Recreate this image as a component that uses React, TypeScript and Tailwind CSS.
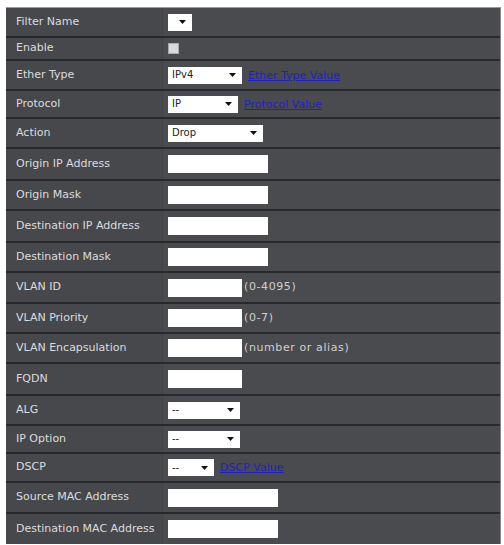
import React from 'react';

type Control =
  | { kind: 'select'; width: number; text?: string; link?: string }
  | { kind: 'checkbox' }
  | { kind: 'input'; width: number; hint?: string };

interface Row {
  label: string;
  height: number;
  control: Control;
}

const rows: Row[] = [
  { label: 'Filter Name', height: 30, control: { kind: 'select', width: 24 } },
  { label: 'Enable', height: 23, control: { kind: 'checkbox' } },
  { label: 'Ether Type', height: 30, control: { kind: 'select', width: 74, text: 'IPv4', link: 'Ether Type Value' } },
  { label: 'Protocol', height: 28, control: { kind: 'select', width: 70, text: 'IP', link: 'Protocol Value' } },
  { label: 'Action', height: 30, control: { kind: 'select', width: 95, text: 'Drop' } },
  { label: 'Origin IP Address', height: 32, control: { kind: 'input', width: 100 } },
  { label: 'Origin Mask', height: 30, control: { kind: 'input', width: 100 } },
  { label: 'Destination IP Address', height: 32, control: { kind: 'input', width: 100 } },
  { label: 'Destination Mask', height: 30, control: { kind: 'input', width: 100 } },
  { label: 'VLAN ID', height: 31, control: { kind: 'input', width: 74, hint: '(0-4095)' } },
  { label: 'VLAN Priority', height: 30, control: { kind: 'input', width: 74, hint: '(0-7)' } },
  { label: 'VLAN Encapsulation', height: 30, control: { kind: 'input', width: 74, hint: '(number or alias)' } },
  { label: 'FQDN', height: 32, control: { kind: 'input', width: 74 } },
  { label: 'ALG', height: 30, control: { kind: 'select', width: 72, text: '--' } },
  { label: 'IP Option', height: 28, control: { kind: 'select', width: 72, text: '--' } },
  { label: 'DSCP', height: 29, control: { kind: 'select', width: 46, text: '--', link: 'DSCP Value' } },
  { label: 'Source MAC Address', height: 31, control: { kind: 'input', width: 110 } },
  { label: 'Destination MAC Address', height: 30, control: { kind: 'input', width: 110 } },
];

const Arrow = () => (
  <svg width="7" height="4" viewBox="0 0 7 4" className="shrink-0">
    <path d="M0 0 L7 0 L3.5 4 Z" fill="#111" />
  </svg>
);

const renderControl = (c: Control) => {
  if (c.kind === 'checkbox') {
    return <div className="w-[11px] h-[11px] bg-[#d9d9d9] border border-[#aaa]" />;
  }
  if (c.kind === 'input') {
    return (
      <div className="flex items-center">
        <div className="h-[18px] bg-white" style={{ width: c.width }} />
        {c.hint && <span className="ml-[2px] text-[11px] text-[#cfcfcf] tracking-[0.6px]">{c.hint}</span>}
      </div>
    );
  }
  return (
    <div className="flex items-center">
      <div
        className="h-[17px] bg-white flex items-center justify-between pl-[4px] pr-[6px]"
        style={{ width: c.width }}
      >
        <span className="text-[10px] text-[#222] leading-none">{c.text ?? ''}</span>
        <Arrow />
      </div>
      {c.link && (
        <a href="#" className="ml-[6px] text-[11px] text-[#1f1fc4] underline leading-none">
          {c.link}
        </a>
      )}
    </div>
  );
};

export default function App() {
  return (
    <div className="w-[504px] h-[545px] bg-white pt-[7px] pl-[6px] overflow-hidden font-['DejaVu_Sans',sans-serif]">
      <div className="w-[495px] border-t border-[#9a9a9a] border-r border-r-[#8a8a8a] bg-[#4a4b4f]">
        {rows.map((row, i) => (
          <div
            key={row.label}
            className={`flex items-stretch ${i < rows.length - 1 ? 'border-b-2 border-[#28292c]' : ''}`}
            style={{ height: row.height }}
          >
            <div className="w-[157px] shrink-0 pl-[10px] flex items-center text-[11px] text-[#dcdcdc] bg-[#47484c] border-r border-[#434448]">
              {row.label}
            </div>
            <div className="flex-1 pl-[5px] flex items-center">{renderControl(row.control)}</div>
          </div>
        ))}
      </div>
    </div>
  );
}
